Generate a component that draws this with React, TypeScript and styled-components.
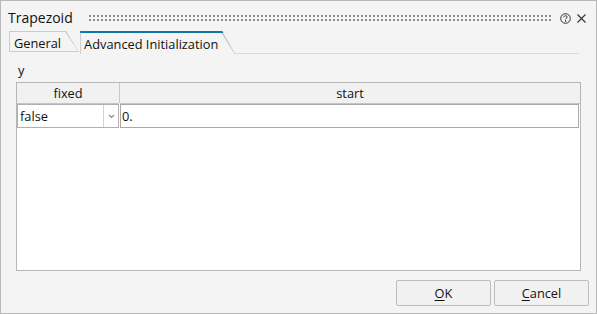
import React from 'react'
import styled, { createGlobalStyle } from 'styled-components'

const GlobalStyle = createGlobalStyle`
  html, body {
    margin: 0;
    padding: 0;
    background: #ffffff;
  }
  body {
    font-family: 'Open Sans', 'Noto Sans', sans-serif;
    font-size: 12.8px;
    color: #111111;
  }
`

const Window = styled.div`
  width: 597px;
  height: 314px;
  box-sizing: border-box;
  border: 1px solid #b8b8b8;
  background: #f4f4f4;
  display: flex;
  flex-direction: column;
`

const TitleBar = styled.div`
  height: 30px;
  box-sizing: border-box;
  padding: 4px 10px 0 7px;
  display: flex;
  align-items: center;
`

const Title = styled.span`
  font-size: 14px;
  line-height: 18px;
  color: #111111;
`

const Grip = styled.div`
  flex: 1;
  height: 7px;
  margin: 0 9px 0 16px;
  background-image: radial-gradient(circle at 1px 1px, #8e8e8e 1px, transparent 1.3px);
  background-size: 4px 4px;
`

const IconButton = styled.span<{ $w: number; $gap?: number }>`
  display: flex;
  align-items: center;
  justify-content: center;
  width: ${(p) => p.$w}px;
  margin-left: ${(p) => p.$gap ?? 0}px;
`

const TabStrip = styled.div`
  height: 23px;
  display: flex;
  align-items: flex-start;
  padding-left: 8px;
`

const TabEdge = styled.div<{ $active?: boolean }>`
  height: ${(p) => (p.$active ? 23 : 21)}px;
  box-sizing: border-box;
  padding: ${(p) => (p.$active ? '0 1px 0 1px' : '1px 1px 1px 1px')};
  background: ${(p) =>
    p.$active ? 'linear-gradient(#0f78a8 0 2px, #cdcdcd 2px)' : '#cacaca'};
  clip-path: polygon(0 0, calc(100% - 13px) 0, 100% 100%, 0 100%);
  margin-right: ${(p) => (p.$active ? 0 : 1)}px;
`

const TabFace = styled.div<{ $active?: boolean }>`
  box-sizing: border-box;
  background: #f4f4f4;
  clip-path: polygon(0 0, calc(100% - 13px) 0, 100% 100%, 0 100%);
  padding: ${(p) => (p.$active ? '0 16px 0 3px' : '3px 17px 0 4px')};
  margin-top: ${(p) => (p.$active ? 2 : 0)}px;
  height: ${(p) => (p.$active ? 'calc(100% - 2px)' : '100%')};
  display: flex;
  align-items: center;
  white-space: nowrap;
`

const TabRule = styled.div`
  flex: 1;
  align-self: flex-end;
  height: 1px;
  margin-right: 17px;
  background: #dadada;
`

const Body = styled.div`
  flex: 1;
  display: flex;
  flex-direction: column;
  padding: 9px 15px 0 15px;
  min-height: 0;
`

const FieldLabel = styled.div`
  height: 14px;
  line-height: 14px;
  padding-left: 2px;
  margin-bottom: 5px;
`

const Table = styled.div`
  flex: 1;
  border: 1px solid #b6b6b6;
  background: #ffffff;
  display: grid;
  grid-template-columns: 102px 1fr;
  grid-template-rows: 20px 24px 1fr;
  row-gap: 1px;
  column-gap: 1px;
  align-content: start;
`

const HeadCell = styled.div<{ $last?: boolean }>`
  background: #f1f1f1;
  display: flex;
  align-items: center;
  justify-content: center;
  box-shadow: 0 1px 0 #c4c4c4, ${(p) => (p.$last ? '0 0 0 transparent' : '1px 0 0 #c8c8c8')};
`

const Combo = styled.div`
  display: flex;
  border: 1px solid #b0b0b0;
  box-sizing: border-box;
`

const ComboValue = styled.div`
  flex: 1;
  display: flex;
  align-items: center;
  padding-left: 2px;
`

const ComboArrow = styled.div`
  width: 14px;
  border-left: 1px solid #d2d2d2;
  display: flex;
  align-items: center;
  justify-content: center;
`

const Input = styled.div`
  border: 1px solid #a8a8a8;
  box-sizing: border-box;
  display: flex;
  align-items: center;
  padding-left: 1px;
  margin-right: 1px;
`

const Footer = styled.div`
  display: flex;
  justify-content: flex-end;
  gap: 3px;
  padding: 9px 7px 7px 0;
`

const Button = styled.button`
  width: 95px;
  height: 26px;
  box-sizing: border-box;
  border: 1px solid #bdbdbd;
  border-radius: 2px;
  background: #f1f1f1;
  font-family: inherit;
  font-size: 12.8px;
  color: #111111;
  padding: 0;
  u {
    text-decoration-thickness: 1px;
    text-underline-offset: 2px;
  }
`

const HelpIcon = () => (
  <svg width="11" height="11" viewBox="0 0 11 11" fill="none" stroke="#333" strokeWidth="1">
    <circle cx="5.5" cy="5.5" r="4.8" />
    <path d="M3.9 4.3c0-1 .7-1.6 1.6-1.6s1.6.6 1.6 1.4c0 .9-1.4 1.1-1.4 2.2" />
    <circle cx="5.7" cy="8" r="0.4" fill="#333" />
  </svg>
)

const CloseIcon = () => (
  <svg width="9" height="9" viewBox="0 0 9 9" stroke="#333" strokeWidth="1.1">
    <path d="M0.5 0.5l8 8M8.5 0.5l-8 8" />
  </svg>
)

const Chevron = () => (
  <svg width="7" height="5" viewBox="0 0 7 5" fill="none" stroke="#8a8a8a" strokeWidth="1.2">
    <path d="M1 1l2.5 2.5L6 1" />
  </svg>
)

const App = () => {
  return (
    <>
      <GlobalStyle />
      <Window>
        <TitleBar>
          <Title>Trapezoid</Title>
          <Grip />
          <IconButton $w={11}>
            <HelpIcon />
          </IconButton>
          <IconButton $w={9} $gap={6}>
            <CloseIcon />
          </IconButton>
        </TitleBar>
        <TabStrip>
          <TabEdge>
            <TabFace>General</TabFace>
          </TabEdge>
          <TabEdge $active>
            <TabFace $active>Advanced Initialization</TabFace>
          </TabEdge>
          <TabRule />
        </TabStrip>
        <Body>
          <FieldLabel>y</FieldLabel>
          <Table>
            <HeadCell>fixed</HeadCell>
            <HeadCell $last>start</HeadCell>
            <Combo>
              <ComboValue>false</ComboValue>
              <ComboArrow>
                <Chevron />
              </ComboArrow>
            </Combo>
            <Input>0.</Input>
          </Table>
        </Body>
        <Footer>
          <Button>
            <u>O</u>K
          </Button>
          <Button>
            <u>C</u>ancel
          </Button>
        </Footer>
      </Window>
    </>
  )
}

export default App
